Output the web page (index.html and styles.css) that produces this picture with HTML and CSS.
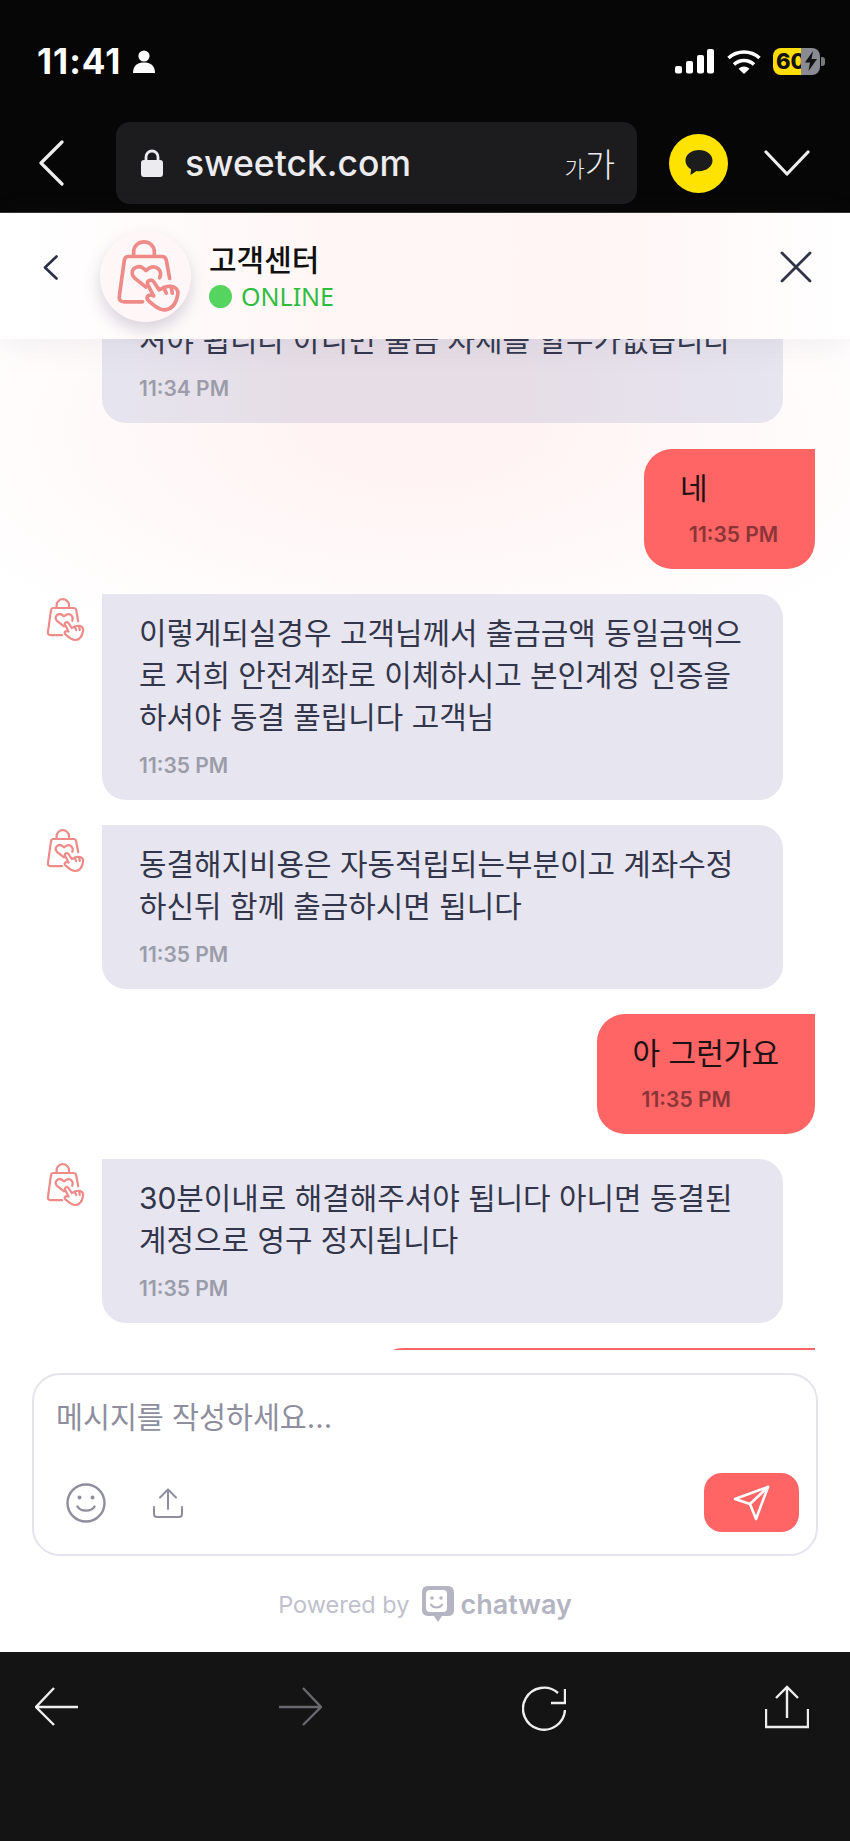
FILE: index.html
```html
<!DOCTYPE html>
<html lang="ko">
<head>
    <meta charset="UTF-8">
    <meta name="viewport" content="width=device-width, initial-scale=1.0">
    <title>고객센터</title>
    <link rel="stylesheet" href="styles.css">
</head>
<body>
    <svg class="sprite" xmlns="http://www.w3.org/2000/svg">
        <symbol id="logo" viewBox="75 45 195 218">
            <g fill="none" stroke="#ee8a88" stroke-width="11" stroke-linecap="round" stroke-linejoin="round">
                <path d="M128 92V80A31 30 0 0 1 190 80V92"/>
                <path d="M155 230H100Q82 230 85 212L100 105Q102 94 112 94H212Q224 94 226 105L236 160"/>
                <path d="M165 186L130 158C112 138 135 116 155 128L165 136L176 128C198 118 215 138 206 158"/>
                <path d="M188 212L170 178C166 166 182 160 188 170L204 194L228 184C250 180 264 192 260 210C256 232 246 252 222 254C204 256 186 238 170 224C164 212 176 206 188 212"/>
                <path d="M218 187L226 204M240 184L244 204"/>
            </g>
        </symbol>
    </svg>

    <div class="topbar">
        <div class="statusbar">
            <div class="status-left">
                <span class="clock">11:41</span>
                <svg class="person" viewBox="0 0 22 23"><circle cx="11" cy="6" r="5.6" fill="#fff"/><path d="M0 23C0 15 5 12.500 11 12.500S22 15 22 23Z" fill="#fff"/></svg>
            </div>
            <div class="status-right">
                <svg class="signal" viewBox="0 0 39 25" fill="#fff">
                    <rect x="0" y="17" width="7" height="7.500" rx="2"/>
                    <rect x="11" y="12" width="7" height="12.500" rx="2"/>
                    <rect x="22" y="6" width="7" height="18.500" rx="2"/>
                    <rect x="32" y="0" width="7" height="24.500" rx="2"/>
                </svg>
                <svg class="wifi" viewBox="0 0 34 25">
                    <path d="M1.500 9A23 23 0 0 1 32.500 9" fill="none" stroke="#fff" stroke-width="3.600"/>
                    <path d="M7 15.500A14.500 14.500 0 0 1 27 15.500" fill="none" stroke="#fff" stroke-width="3.600"/>
                    <path d="M17 25L11.500 19.800A8 8 0 0 1 22.500 19.800Z" fill="#fff"/>
                </svg>
                <div class="battery">
                    <div class="battery-fill">60</div>
                    <div class="battery-rest">
                        <svg class="bolt" viewBox="0 0 12 20"><path d="M8 0L0 11.500H5L3.500 20L12 8H6.500Z" fill="#111"/></svg>
                    </div>
                </div>
                <span class="battery-nub"></span>
            </div>
        </div>
        <div class="browserbar">
            <svg class="nav-back" viewBox="0 0 26 46"><path d="M24 2L3 23L24 44" fill="none" stroke="#eee" stroke-width="3.200" stroke-linecap="round" stroke-linejoin="round"/></svg>
            <div class="urlbox">
                <svg class="lock" viewBox="0 0 22 28"><path d="M5 12V8A6 6 0 0 1 17 8V12" fill="none" stroke="#ebebf0" stroke-width="2.800"/><rect x="0" y="11" width="22" height="17" rx="3" fill="#ebebf0"/></svg>
                <span class="url">sweetck.com</span>
                <span class="textsize"><small>가</small>가</span>
            </div>
            <div class="kakao">
                <svg viewBox="0 0 28 28"><path d="M14 1C6.500 1 .500 5.500 .500 11.500C.500 15.500 3 18.500 6 20.300L5.500 26L11.500 22C12.300 22.100 13.100 22.200 14 22.200C21.500 22.200 27.500 17.500 27.500 11.500S21.500 1 14 1Z" fill="#1c1c1c"/></svg>
            </div>
            <svg class="nav-down" viewBox="0 0 46 26"><path d="M2 2L23 24L44 2" fill="none" stroke="#eee" stroke-width="3.200" stroke-linecap="round" stroke-linejoin="round"/></svg>
        </div>
    </div>

    <div class="webview">
        <div class="chat-header">
            <svg class="head-back" viewBox="0 0 15 25"><path d="M13.500 1.500L2 12.500L13.500 23.500" fill="none" stroke="#2a2f45" stroke-width="2.600" stroke-linecap="round" stroke-linejoin="round"/></svg>
            <div class="avatar"><svg class="avatar-logo"><use href="#logo"/></svg></div>
            <div class="head-text">
                <div class="head-title">고객센터</div>
                <div class="head-status"><span class="dot"></span>ONLINE</div>
            </div>
            <svg class="head-close" viewBox="0 0 32 32"><path d="M2 2L30 30M30 2L2 30" fill="none" stroke="#2f3446" stroke-width="2.800" stroke-linecap="round"/></svg>
        </div>

        <div class="chat">
            <div class="messages">
                <div class="row">
                    <div class="bubble tinted">
                        <p class="text">셔야 됩니다 아니면 출금 자체를 할수가없습니다</p>
                        <div class="time">11:34 PM</div>
                    </div>
                </div>
                <div class="row sent">
                    <div class="bubble-me">
                        <p class="text-me">네</p>
                        <div class="time-me">11:35 PM</div>
                    </div>
                </div>
                <div class="row">
                    <svg class="mini-logo"><use href="#logo"/></svg>
                    <div class="bubble">
                        <p class="text">이렇게되실경우 고객님께서 출금금액 동일금액으<br>로 저희 안전계좌로 이체하시고 본인계정 인증을<br>하셔야 동결 풀립니다 고객님</p>
                        <div class="time">11:35 PM</div>
                    </div>
                </div>
                <div class="row">
                    <svg class="mini-logo"><use href="#logo"/></svg>
                    <div class="bubble">
                        <p class="text">동결해지비용은 자동적립되는부분이고 계좌수정<br>하신뒤 함께 출금하시면 됩니다</p>
                        <div class="time">11:35 PM</div>
                    </div>
                </div>
                <div class="row sent">
                    <div class="bubble-me">
                        <p class="text-me">아 그런가요</p>
                        <div class="time-me">11:35 PM</div>
                    </div>
                </div>
                <div class="row">
                    <svg class="mini-logo"><use href="#logo"/></svg>
                    <div class="bubble">
                        <p class="text">30분이내로 해결해주셔야 됩니다 아니면 동결된<br>계정으로 영구 정지됩니다</p>
                        <div class="time">11:35 PM</div>
                    </div>
                </div>
                <div class="row sent">
                    <div class="bubble-me long"></div>
                </div>
            </div>
        </div>

        <div class="composer">
            <div class="placeholder">메시지를 작성하세요...</div>
            <div class="tools">
                <svg class="emoji" viewBox="0 0 40 40" fill="none" stroke="#8e8e9e" stroke-width="2.400" stroke-linecap="round">
                    <circle cx="20" cy="20" r="18.500"/>
                    <path d="M11.500 23.500C14.500 29 25.500 29 28.500 23.500"/>
                    <circle cx="13.500" cy="14.500" r=".8" fill="#8e8e9e"/>
                    <circle cx="26.500" cy="14.500" r=".8" fill="#8e8e9e"/>
                </svg>
                <svg class="upload" viewBox="0 0 30 30" fill="none" stroke="#8e8e9e" stroke-width="2" stroke-linecap="round" stroke-linejoin="round">
                    <path d="M15 21V2M7 9.500L15 1.500L23 9.500"/>
                    <path d="M1 19V26Q1 29 4 29H26Q29 29 29 26V19"/>
                </svg>
                <button class="send">
                    <svg viewBox="0 0 37 37" fill="none" stroke="#fff" stroke-width="2.600" stroke-linejoin="round" stroke-linecap="round">
                        <path d="M35 3L2 15L17 20L23 35Z"/>
                        <path d="M17 20L35 3"/>
                    </svg>
                </button>
            </div>
        </div>

        <div class="powered">
            <span>Powered by</span>
            <svg class="chatway-logo" viewBox="0 0 34 38">
                <path d="M7 1H27Q33 1 33 8V25Q33 31 27 31H21L17 37L13 31H8Q1 31 1 25V7Q1 1 7 1Z" fill="#b4b4c2"/>
                <rect x="5" y="5" width="21" height="22" rx="4" fill="#fff"/>
                <circle cx="11" cy="13" r="1.800" fill="#b4b4c2"/>
                <circle cx="20" cy="13" r="1.800" fill="#b4b4c2"/>
                <path d="M10 19.500C12 23.500 19 23.500 21 19.500" fill="none" stroke="#b4b4c2" stroke-width="2" stroke-linecap="round"/>
            </svg>
            <span class="chatway">chatway</span>
        </div>
    </div>

    <div class="bottombar">
        <svg class="tool-icon" viewBox="0 0 44 48"><path d="M19 3L1 22L19 40M1 22H43" fill="none" stroke="#eee" stroke-width="2.400"/></svg>
        <svg class="tool-icon" viewBox="0 0 44 48"><path d="M25 3L43 22L25 40M43 22H1" fill="none" stroke="#68686e" stroke-width="2.400"/></svg>
        <svg class="tool-icon" viewBox="0 0 44 48"><path d="M36 8A21 21 0 1 0 43 25M43 4V18H29" fill="none" stroke="#eee" stroke-width="2.400"/></svg>
        <svg class="tool-icon" viewBox="0 0 44 48"><path d="M1 24V42H43V24M22 33V2M11 13L22 2L33 13" fill="none" stroke="#eee" stroke-width="2.400"/></svg>
    </div>
</body>
</html>
```

FILE: styles.css
```css
* {
    padding: 0;
    margin: 0;
    box-sizing: border-box;
}
body {
    width: 850px;
    height: 1841px;
    overflow: hidden;
    font-family: Inter, "Noto Sans CJK KR", sans-serif;
    background: #fff;
}
.sprite {
    display: block;
    width: 0;
    height: 0;
}

/* phone + browser chrome */
.topbar {
    height: 213px;
    background: #060606;
    border-bottom: 1px solid #333;
}
.statusbar {
    height: 122px;
    padding: 0 25px 0 37px;
    display: flex;
    justify-content: space-between;
    align-items: center;
}
.status-left {
    display: flex;
    align-items: center;
    gap: 12px;
}
.clock {
    color: #fff;
    font-size: 35px;
    font-weight: 700;
    letter-spacing: 1px;
}
.person {
    width: 22px;
    height: 23px;
}
.status-right {
    display: flex;
    align-items: center;
}
.signal {
    width: 39px;
    height: 25px;
}
.wifi {
    width: 34px;
    height: 25px;
    margin-left: 13px;
}
.battery {
    width: 47px;
    height: 27px;
    margin-left: 12px;
    border-radius: 8px;
    overflow: hidden;
    display: flex;
}
.battery-fill {
    width: 28px;
    background: #ffdd00;
    color: #111;
    font-size: 22px;
    font-weight: 800;
    line-height: 27px;
    padding-left: 3px;
    white-space: nowrap;
}
.battery-rest {
    flex: 1;
    background: #8a8a92;
    display: flex;
    align-items: center;
    justify-content: flex-end;
    padding-right: 3px;
}
.bolt {
    width: 12px;
    height: 20px;
}
.battery-nub {
    width: 4px;
    height: 9px;
    margin-left: 1px;
    background: #77777d;
    border-radius: 0 3px 3px 0;
}
.browserbar {
    height: 82px;
    padding-left: 38px;
    display: flex;
    align-items: center;
}
.nav-back {
    width: 26px;
    height: 46px;
}
.urlbox {
    width: 521px;
    height: 82px;
    margin-left: 52px;
    padding: 0 22px 0 25px;
    background: #1c1c1e;
    border-radius: 14px;
    display: flex;
    align-items: center;
    color: #ebebf0;
}
.lock {
    width: 22px;
    height: 28px;
}
.url {
    margin-left: 22px;
    font-size: 35.500px;
    font-weight: 500;
    flex: 1;
}
.textsize {
    font-size: 33px;
    font-weight: 300;
}
.textsize small {
    font-size: 22px;
}
.kakao {
    width: 59px;
    height: 59px;
    margin-left: 32px;
    border-radius: 50%;
    background: #ffe300;
    display: flex;
    align-items: center;
    justify-content: center;
}
.kakao svg {
    width: 28px;
    height: 28px;
}
.nav-down {
    width: 46px;
    height: 26px;
    margin-left: 36px;
}

/* webview */
.webview {
    height: 1439px;
    display: flex;
    flex-direction: column;
    background: #fff;
}
.chat-header {
    height: 126px;
    flex-shrink: 0;
    position: relative;
    z-index: 2;
    display: flex;
    align-items: center;
    padding: 0 38px 0 43px;
    background: linear-gradient(90deg, #fff 2%, #fff6f5 40%, #fff5f4 70%, #fff 100%);
    box-shadow: 0 6px 30px rgba(120, 120, 150, 0.1);
}
.head-back {
    width: 15px;
    height: 25px;
    margin-bottom: 18px;
}
.avatar {
    width: 91px;
    height: 91px;
    margin-left: 42px;
    border-radius: 50%;
    background: #fff7f7;
    box-shadow: 0 8px 16px rgba(100, 90, 130, 0.25);
    display: flex;
    align-items: center;
    justify-content: center;
}
.avatar-logo {
    width: 65px;
    height: 73px;
    margin-left: 5px;
}
.head-text {
    margin-left: 18px;
    flex: 1;
}
.head-title {
    font-size: 30px;
    font-weight: 500;
    line-height: 40px;
    color: #111;
}
.head-status {
    display: flex;
    align-items: center;
    gap: 9px;
    font-family: "Noto Sans", sans-serif;
    font-size: 25px;
    line-height: 32px;
    color: #2ebd3e;
}
.dot {
    width: 23px;
    height: 23px;
    border-radius: 50%;
    background: #55d45f;
}
.head-close {
    width: 32px;
    height: 32px;
    margin-bottom: 18px;
}
.chat {
    height: 1011px;
    flex-shrink: 0;
    overflow: hidden;
    background: radial-gradient(ellipse 540px 250px at 420px 90px, #fff4f3 20%, #fff 100%);
}
.messages {
    margin-top: -38px;
    padding: 0 35px 0 46px;
    display: flex;
    flex-direction: column;
    gap: 25px;
}
.row {
    display: flex;
    align-items: flex-start;
}
.row.sent {
    justify-content: flex-end;
}
.mini-logo {
    width: 39px;
    height: 44px;
    margin-top: 4px;
    flex-shrink: 0;
}
.bubble {
    width: 681px;
    margin-left: 17px;
    padding: 18px 20px 19px 37px;
    background: #e6e5f0;
    border-radius: 0 24px 24px 24px;
}
.bubble.tinted {
    margin: 0 0 1px 56px;
    background: linear-gradient(90deg, #e6e5ef 0%, #e6dde6 30%, #e6dde6 60%, #e6e5f0 100%);
}
.text {
    font-size: 29.900px;
    line-height: 42px;
    color: #33364a;
    white-space: nowrap;
}
.time {
    margin-top: 13px;
    font-size: 21px;
    font-weight: 600;
    line-height: 30px;
    color: #9b9ca8;
}
.bubble-me {
    min-width: 171px;
    padding: 18px 36px 19px;
    background: #ff6565;
    border-radius: 28px 0 28px 28px;
}
.bubble-me.long {
    width: 440px;
    height: 120px;
}
.text-me {
    font-size: 30px;
    line-height: 42px;
    color: #1c1214;
}
.time-me {
    margin: 11px 0 0 9px;
    font-size: 21px;
    font-weight: 600;
    line-height: 30px;
    color: #8a3538;
}

/* message box */
.composer {
    width: 786px;
    height: 183px;
    margin: 23px 0 0 32px;
    padding: 23px 17px 22px 22px;
    border: 2px solid #e4e4ef;
    border-radius: 28px;
    background: #fff;
    display: flex;
    flex-direction: column;
    justify-content: space-between;
}
.placeholder {
    font-size: 29.300px;
    line-height: 40px;
    color: #8e8e9e;
}
.tools {
    display: flex;
    align-items: center;
    padding-left: 10px;
}
.emoji {
    width: 40px;
    height: 40px;
}
.upload {
    width: 30px;
    height: 30px;
    margin-left: 47px;
}
.send {
    width: 95px;
    height: 59px;
    margin-left: auto;
    border: none;
    border-radius: 18px;
    background: #ff6565;
    display: flex;
    align-items: center;
    justify-content: center;
}
.send svg {
    width: 37px;
    height: 37px;
}
.powered {
    margin-top: 29px;
    display: flex;
    align-items: center;
    justify-content: center;
    font-size: 23.500px;
    color: #c0c0ce;
}
.chatway-logo {
    width: 34px;
    height: 38px;
    margin: 0 6px 0 11px;
}
.chatway {
    font-size: 27px;
    font-weight: 600;
    color: #b4b4c2;
}

/* browser toolbar */
.bottombar {
    height: 189px;
    padding: 33px 41px 0 35px;
    background: #141414;
    display: flex;
    justify-content: space-between;
    align-items: flex-start;
}
.tool-icon {
    width: 44px;
    height: 48px;
}
```
